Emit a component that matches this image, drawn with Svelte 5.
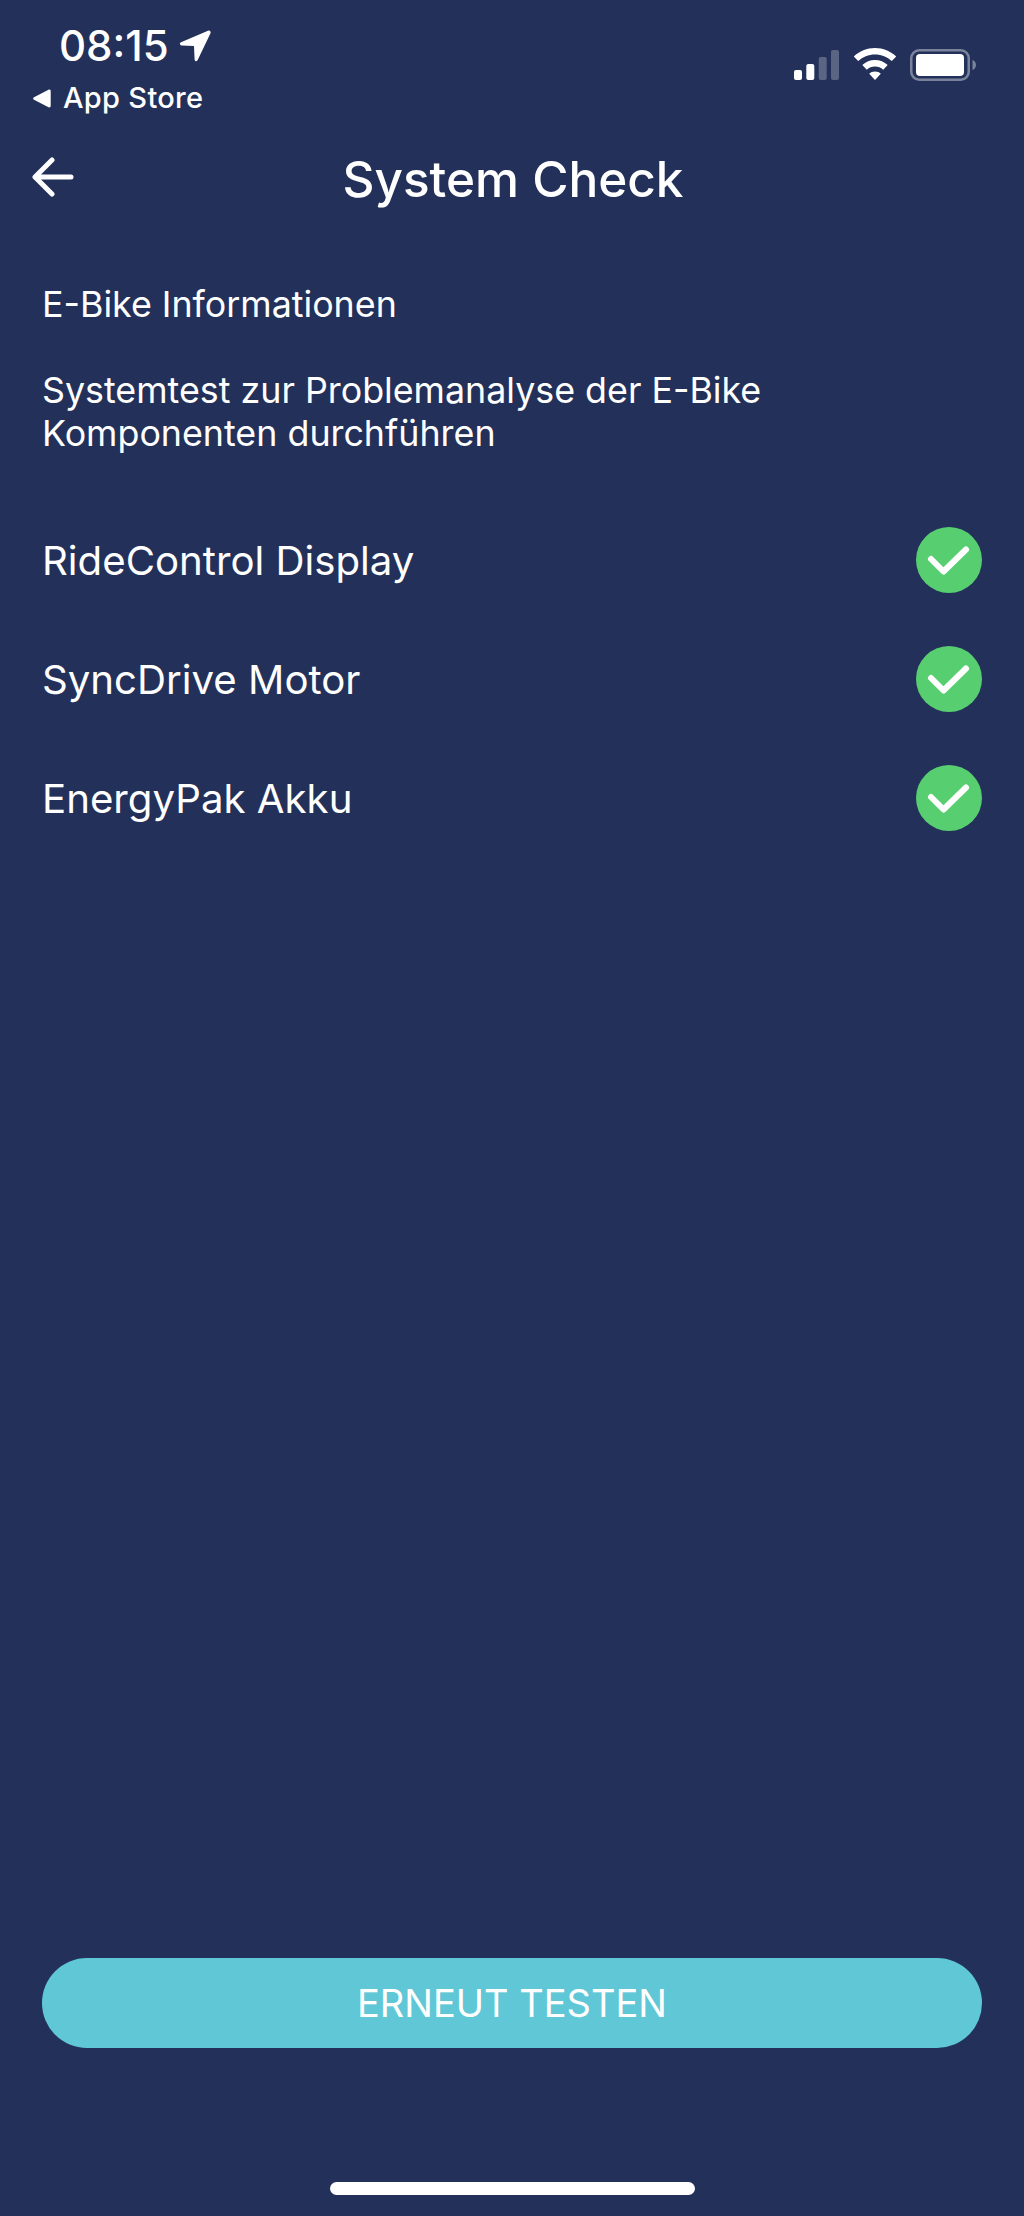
<script lang="ts">
	const components = ['RideControl Display', 'SyncDrive Motor', 'EnergyPak Akku'];
</script>

<main class="screen">
	<header class="status">
		<div class="status-left">
			<div class="time">
				<span>08:15</span>
				<svg class="loc" viewBox="0 0 32 32" aria-hidden="true">
					<path d="M29 .8 2 12.300C.2 13.100.6 15.300 2.600 15.400l12.400.5.600 13.500c.1 2 2.300 2.400 3.100.6L31.500 3.300C32.100 1.600 30.700.1 29 .8z" fill="#fff" />
				</svg>
			</div>
			<div class="back-app">
				<svg class="tri" viewBox="0 0 18 19" aria-hidden="true">
					<path d="M1 8.300 15.500.8c1.100-.5 2.200.1 2.200 1.300v14.800c0 1.200-1.100 1.800-2.200 1.300L1 10.700c-1.100-.6-1.100-1.800 0-2.400z" fill="#fff" />
				</svg>
				<span>App Store</span>
			</div>
		</div>
		<div class="status-right">
			<svg class="signal" viewBox="0 0 46 30" aria-hidden="true">
				<rect x="0" y="20" width="8" height="10" rx="2" fill="#fff" />
				<rect x="12.300" y="14" width="8" height="16" rx="2" fill="#fff" />
				<rect x="24.700" y="7" width="8" height="23" rx="2" fill="#fff" opacity="0.25" />
				<rect x="37" y="0" width="8" height="30" rx="2" fill="#fff" opacity="0.25" />
			</svg>
			<svg class="wifi" viewBox="0 0 44 32" aria-hidden="true">
				<path d="M22 0C13.800 0 6.400 3.200.8 8.400l4.400 4.700C9.600 9 15.500 6.500 22 6.500s12.400 2.500 16.800 6.600l4.400-4.700C37.600 3.200 30.200 0 22 0z" fill="#fff" />
				<path d="M22 12c-4.900 0-9.300 1.900-12.700 5l4.500 4.800c2.200-2 5-3.200 8.200-3.200s6 1.200 8.200 3.200l4.500-4.800C31.300 13.900 26.900 12 22 12z" fill="#fff" />
				<path d="M22 23.500c-2.300 0-4.300.9-5.800 2.300L22 32l5.800-6.200c-1.500-1.400-3.500-2.300-5.800-2.300z" fill="#fff" />
			</svg>
			<svg class="battery" viewBox="0 0 66 32" aria-hidden="true">
				<rect x="1.250" y="1.250" width="57.500" height="29.500" rx="8" fill="none" stroke="#fff" stroke-opacity="0.4" stroke-width="2.500" />
				<rect x="6" y="5" width="48" height="22" rx="4" fill="#fff" />
				<path d="M62.500 11c2.200.8 3.500 2.800 3.500 5s-1.300 4.200-3.500 5z" fill="#fff" opacity="0.4" />
			</svg>
		</div>
	</header>

	<nav class="nav">
		<svg class="arrow" viewBox="0 0 42 42" aria-hidden="true">
			<path d="M39 21H4M20 4 3 21l17 17" fill="none" stroke="#fff" stroke-width="5" stroke-linecap="round" stroke-linejoin="round" />
		</svg>
		<h1>System Check</h1>
	</nav>

	<section class="intro">
		<p>E-Bike Informationen</p>
		<p>Systemtest zur Problemanalyse der E-Bike<br />Komponenten durchführen</p>
	</section>

	<ul class="list">
		{#each components as name}
			<li>
				<span>{name}</span>
				<svg class="check" viewBox="0 0 66 66" aria-hidden="true">
					<circle cx="33" cy="33" r="33" fill="#57cf70" />
					<path d="M15 32 27.500 44.500 50 22.500" fill="none" stroke="#fff" stroke-width="6" stroke-linecap="round" stroke-linejoin="round" />
				</svg>
			</li>
		{/each}
	</ul>

	<button class="retest" type="button">ERNEUT TESTEN</button>
	<div class="home-bar"></div>
</main>

<style>
	:global(body) {
		margin: 0;
		background: #23315a;
	}

	.screen {
		display: flex;
		flex-direction: column;
		box-sizing: border-box;
		width: 1024px;
		height: 2216px;
		padding-bottom: 21px;
		background: #23315a;
		color: #fff;
		font-family: Inter, 'Liberation Sans', sans-serif;
	}

	.status {
		display: flex;
		justify-content: space-between;
		align-items: flex-start;
		height: 149px;
		padding: 26px 48px 0 33px;
		box-sizing: border-box;
	}

	.time {
		display: flex;
		align-items: center;
		gap: 10px;
		padding-left: 26px;
		height: 40px;
		font-size: 42px;
		font-weight: 500;
		line-height: 40px;
	}

	.loc {
		width: 32px;
		height: 32px;
	}

	.back-app {
		display: flex;
		align-items: center;
		gap: 12px;
		margin-top: 16px;
		height: 32px;
		font-size: 29px;
		font-weight: 500;
		letter-spacing: 0.3px;
		line-height: 32px;
	}

	.tri {
		width: 18px;
		height: 19px;
	}

	.status-right {
		display: flex;
		align-items: flex-start;
		margin-top: 24px;
	}

	.signal {
		width: 46px;
		height: 30px;
	}

	.wifi {
		width: 44px;
		height: 32px;
		margin: -2px 0 0 13px;
	}

	.battery {
		width: 66px;
		height: 32px;
		margin: -1px 0 0 13px;
	}

	.nav {
		position: relative;
		display: flex;
		justify-content: center;
		align-items: center;
		height: 60px;
	}

	.arrow {
		position: absolute;
		left: 32px;
		top: 7px;
		width: 42px;
		height: 42px;
	}

	h1 {
		margin: 0;
		font-size: 49.500px;
		font-weight: 500;
		line-height: 60px;
		transform: translateX(1px);
	}

	.intro {
		padding: 0 42px;
		margin-top: 74px;
	}

	.intro p {
		margin: 0 0 43px;
		font-size: 35.800px;
		font-weight: 400;
		line-height: 43px;
	}

	.list {
		list-style: none;
		margin: 29px 0 0;
		padding: 0 42px;
	}

	.list li {
		display: flex;
		justify-content: space-between;
		align-items: center;
		height: 66px;
		margin-bottom: 53px;
		font-size: 40.200px;
		font-weight: 400;
	}

	.check {
		width: 66px;
		height: 66px;
	}

	.retest {
		display: block;
		margin: auto 42px 0;
		height: 90px;
		border: none;
		border-radius: 45px;
		background: #60c7d7;
		color: #fff;
		font: inherit;
		font-size: 38px;
		font-weight: 400;
	}

	.home-bar {
		width: 365px;
		height: 13px;
		margin: 134px auto 0;
		border-radius: 7px;
		background: #fff;
	}
</style>
